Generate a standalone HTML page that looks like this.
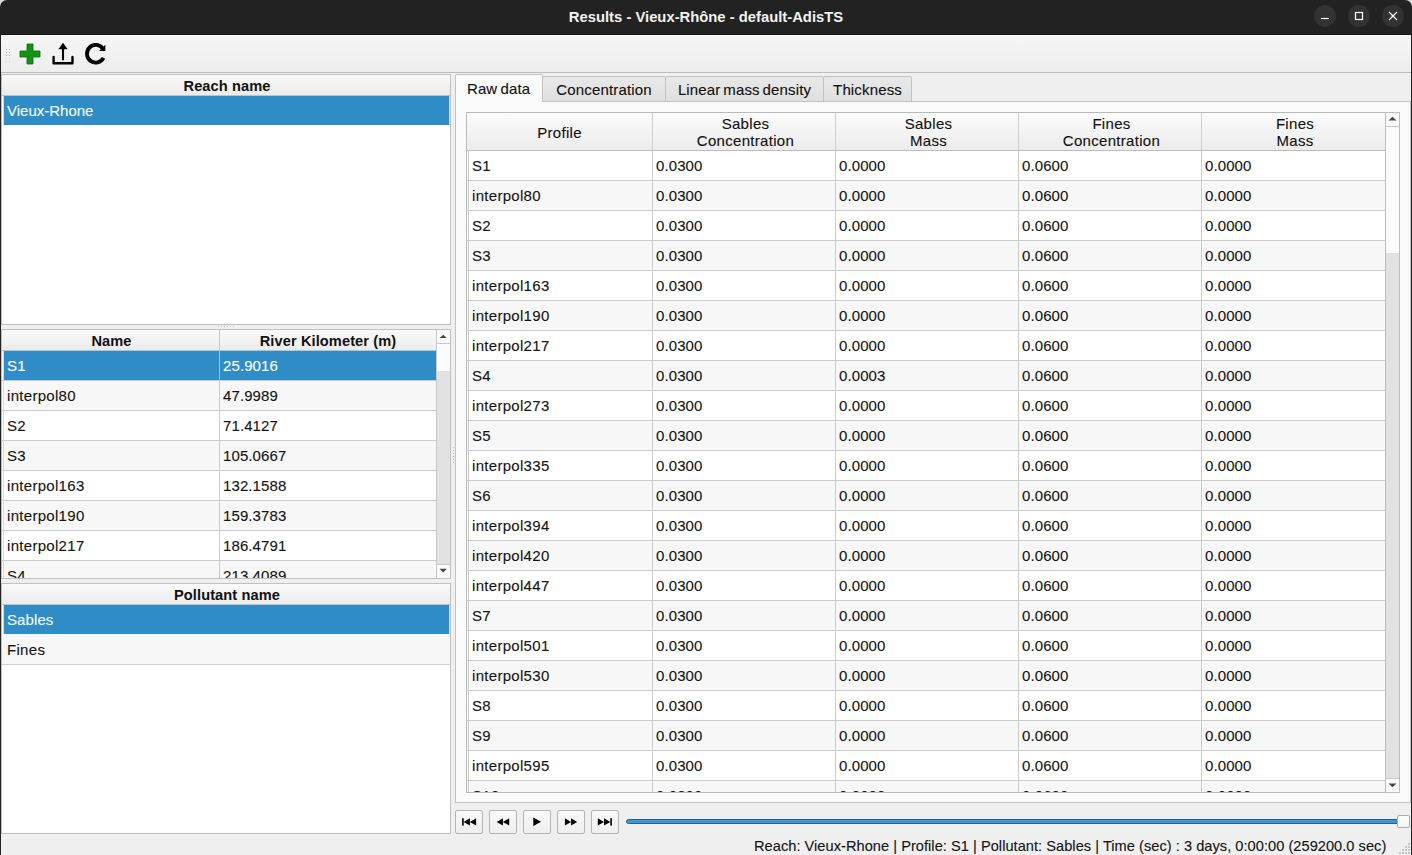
<!DOCTYPE html><html><head><meta charset="utf-8"><style>
*{margin:0;padding:0;box-sizing:border-box}
html,body{width:1412px;height:855px;overflow:hidden;background:#efefef;font-family:"Liberation Sans",sans-serif;color:#141414}
.a{position:absolute}
.t{position:absolute;white-space:nowrap;line-height:1;font-size:15px;letter-spacing:0.3px;-webkit-text-stroke:0.12px currentColor}
.b{font-weight:bold;font-size:14.6px;color:#111;letter-spacing:0.1px;-webkit-text-stroke:0}
</style></head><body><div class="a" style="left:0px;top:0px;width:1412px;height:20px;background:#dcdcdc"></div><div class="a" style="left:0px;top:0px;width:1412px;height:35px;background:#222222;border-radius:7px 7px 0 0"></div><div class="t" style="left:406.0px;top:10px;width:600px;text-align:center;color:#f2f2f2;font-weight:bold;font-size:14.8px;letter-spacing:0;-webkit-text-stroke:0">Results - Vieux-Rhône - default-AdisTS</div><div class="a" style="left:1314px;top:5px;width:22px;height:22px;background:#323232;border-radius:50%"></div><div class="a" style="left:1348px;top:5px;width:22px;height:22px;background:#323232;border-radius:50%"></div><div class="a" style="left:1382px;top:5px;width:22px;height:22px;background:#323232;border-radius:50%"></div><svg class="a" style="left:0;top:0" width="1412" height="35"><line x1="1321" y1="18.5" x2="1329" y2="18.5" stroke="#fff" stroke-width="1.2"/><rect x="1355.5" y="12.5" width="7" height="7" fill="none" stroke="#fff" stroke-width="1.2"/><path d="M1389 12 L1397 20 M1397 12 L1389 20" stroke="#fff" stroke-width="1.3"/></svg><div class="a" style="left:0px;top:35px;width:1px;height:820px;background:#222"></div><div class="a" style="left:1411px;top:35px;width:1px;height:820px;background:#222"></div><div class="a" style="left:1px;top:35px;width:1410px;height:37px;background:linear-gradient(#f6f6f6,#ededed)"></div><div class="a" style="left:1px;top:72px;width:1410px;height:1px;background:#bcbcbc"></div><div class="a" style="left:1px;top:35px;width:1410px;height:1px;background:#fdfdfd"></div><div class="a" style="left:0px;top:34px;width:1412px;height:1px;background:#141414"></div><div class="a" style="left:6px;top:49px;width:1px;height:1px;background:#b4b4b4"></div><div class="a" style="left:9px;top:49px;width:1px;height:1px;background:#b4b4b4"></div><div class="a" style="left:6px;top:52px;width:1px;height:1px;background:#b4b4b4"></div><div class="a" style="left:9px;top:52px;width:1px;height:1px;background:#b4b4b4"></div><div class="a" style="left:6px;top:55px;width:1px;height:1px;background:#b8b8b8"></div><div class="a" style="left:9px;top:55px;width:1px;height:1px;background:#b8b8b8"></div><div class="a" style="left:6px;top:58px;width:1px;height:1px;background:#d8d8d8"></div><div class="a" style="left:9px;top:58px;width:1px;height:1px;background:#d8d8d8"></div><div class="a" style="left:6px;top:61px;width:1px;height:1px;background:#dcdcdc"></div><div class="a" style="left:9px;top:61px;width:1px;height:1px;background:#dcdcdc"></div><svg class="a" style="left:0;top:35px" width="120" height="37"><g transform="translate(0,-35)"><path d="M27 44h6v7h7v6h-7v7h-6v-7h-7v-6h7z" fill="#129412" stroke="#0b6a0b" stroke-width="0.8"/><path d="M53.6 57v6.3h18.9v-6.3" fill="none" stroke="#000" stroke-width="2.4" stroke-linejoin="round" stroke-linecap="round"/><path d="M63 49v10.5" stroke="#000" stroke-width="2.1" stroke-linecap="round"/><path d="M58.4 49.2L63 42.7L67.7 49.2z" fill="#000"/><path d="M103.52 57.88A8.8 8.8 0 1 1 102.68 48.33" fill="none" stroke="#000" stroke-width="3.8"/><path d="M105.4 44.7V51H99.1z" fill="#000"/></g></svg><div class="a" style="left:1px;top:74px;width:450px;height:251px;background:#fff;border:1px solid #c0c0c0"></div><div class="a" style="left:2px;top:75px;width:448px;height:21px;background:linear-gradient(#fafafa,#ebebeb);border-bottom:1px solid #c1c1c1"></div><div class="t b" style="left:27.0px;top:79px;width:400px;text-align:center;">Reach name</div><div class="a" style="left:3px;top:96px;width:447px;height:29px;background:#c9dbe8"></div><div class="a" style="left:4px;top:96px;width:445px;height:29px;background:#308cc6"></div><div class="t" style="left:7px;top:103px;color:#f4faff;letter-spacing:0">Vieux-Rhone</div><div class="a" style="left:453px;top:447px;width:1px;height:1px;background:#bdbdbd"></div><div class="a" style="left:453px;top:450px;width:1px;height:1px;background:#bdbdbd"></div><div class="a" style="left:453px;top:453px;width:1px;height:1px;background:#bdbdbd"></div><div class="a" style="left:453px;top:456px;width:1px;height:1px;background:#bdbdbd"></div><div class="a" style="left:453px;top:459px;width:1px;height:1px;background:#bdbdbd"></div><div class="a" style="left:453px;top:462px;width:1px;height:1px;background:#bdbdbd"></div><div class="a" style="left:218px;top:326px;width:1px;height:1px;background:#c4c4c4"></div><div class="a" style="left:221px;top:326px;width:1px;height:1px;background:#c4c4c4"></div><div class="a" style="left:224px;top:326px;width:1px;height:1px;background:#c4c4c4"></div><div class="a" style="left:227px;top:326px;width:1px;height:1px;background:#c4c4c4"></div><div class="a" style="left:230px;top:326px;width:1px;height:1px;background:#c4c4c4"></div><div class="a" style="left:233px;top:326px;width:1px;height:1px;background:#c4c4c4"></div><div class="a" style="left:1px;top:329px;width:450px;height:250px;background:#fff;border:1px solid #c0c0c0"></div><div class="a" style="left:2px;top:330px;width:434px;height:21px;background:linear-gradient(#fafafa,#ebebeb);border-bottom:1px solid #c1c1c1"></div><div class="a" style="left:219px;top:330px;width:1px;height:21px;background:#c8c8c8"></div><div class="t b" style="left:-88.5px;top:334px;width:400px;text-align:center;">Name</div><div class="t b" style="left:128.0px;top:334px;width:400px;text-align:center;">River Kilometer (m)</div><div class="a" style="left:2px;top:351px;width:434px;height:227px;overflow:hidden"><div class="a" style="left:2px;top:0px;width:432px;height:29px;background:#308cc6"></div><div class="a" style="left:0;top:29px;width:434px;height:1px;background:#cbcbcb"></div><div class="a" style="left:217px;top:0px;width:1px;height:30px;background:#9cc7e4"></div><div class="t" style="left:5px;top:7px;color:#fff">S1</div><div class="t" style="left:221px;top:7px;color:#fff;letter-spacing:0.1px">25.9016</div><div class="a" style="left:2px;top:30px;width:432px;height:29px;background:#f7f7f7"></div><div class="a" style="left:0;top:59px;width:434px;height:1px;background:#cbcbcb"></div><div class="a" style="left:217px;top:30px;width:1px;height:30px;background:#cbcbcb"></div><div class="t" style="left:5px;top:37px;color:#141414">interpol80</div><div class="t" style="left:221px;top:37px;color:#141414;letter-spacing:0.1px">47.9989</div><div class="a" style="left:2px;top:60px;width:432px;height:29px;background:#ffffff"></div><div class="a" style="left:0;top:89px;width:434px;height:1px;background:#cbcbcb"></div><div class="a" style="left:217px;top:60px;width:1px;height:30px;background:#cbcbcb"></div><div class="t" style="left:5px;top:67px;color:#141414">S2</div><div class="t" style="left:221px;top:67px;color:#141414;letter-spacing:0.1px">71.4127</div><div class="a" style="left:2px;top:90px;width:432px;height:29px;background:#f7f7f7"></div><div class="a" style="left:0;top:119px;width:434px;height:1px;background:#cbcbcb"></div><div class="a" style="left:217px;top:90px;width:1px;height:30px;background:#cbcbcb"></div><div class="t" style="left:5px;top:97px;color:#141414">S3</div><div class="t" style="left:221px;top:97px;color:#141414;letter-spacing:0.1px">105.0667</div><div class="a" style="left:2px;top:120px;width:432px;height:29px;background:#ffffff"></div><div class="a" style="left:0;top:149px;width:434px;height:1px;background:#cbcbcb"></div><div class="a" style="left:217px;top:120px;width:1px;height:30px;background:#cbcbcb"></div><div class="t" style="left:5px;top:127px;color:#141414">interpol163</div><div class="t" style="left:221px;top:127px;color:#141414;letter-spacing:0.1px">132.1588</div><div class="a" style="left:2px;top:150px;width:432px;height:29px;background:#f7f7f7"></div><div class="a" style="left:0;top:179px;width:434px;height:1px;background:#cbcbcb"></div><div class="a" style="left:217px;top:150px;width:1px;height:30px;background:#cbcbcb"></div><div class="t" style="left:5px;top:157px;color:#141414">interpol190</div><div class="t" style="left:221px;top:157px;color:#141414;letter-spacing:0.1px">159.3783</div><div class="a" style="left:2px;top:180px;width:432px;height:29px;background:#ffffff"></div><div class="a" style="left:0;top:209px;width:434px;height:1px;background:#cbcbcb"></div><div class="a" style="left:217px;top:180px;width:1px;height:30px;background:#cbcbcb"></div><div class="t" style="left:5px;top:187px;color:#141414">interpol217</div><div class="t" style="left:221px;top:187px;color:#141414;letter-spacing:0.1px">186.4791</div><div class="a" style="left:2px;top:210px;width:432px;height:29px;background:#f7f7f7"></div><div class="a" style="left:0;top:239px;width:434px;height:1px;background:#cbcbcb"></div><div class="a" style="left:217px;top:210px;width:1px;height:30px;background:#cbcbcb"></div><div class="t" style="left:5px;top:217px;color:#141414">S4</div><div class="t" style="left:221px;top:217px;color:#141414;letter-spacing:0.1px">213.4089</div><div class="a" style="left:1px;top:0;width:1px;height:227px;background:#dadada"></div></div><div class="a" style="left:436px;top:330px;width:14px;height:248px;background:#fafafa;border-left:1px solid #c8c8c8"></div><div class="a" style="left:436px;top:343px;width:14px;height:1px;background:#c8c8c8"></div><div class="a" style="left:437px;top:344px;width:13px;height:27px;background:#fbfbfb"></div><div class="a" style="left:437px;top:371px;width:13px;height:193px;background:#e2e2e2"></div><div class="a" style="left:436px;top:564px;width:14px;height:1px;background:#c8c8c8"></div><svg class="a" style="left:436px;top:330px" width="15" height="248"><path d="M3.6 8L7.2 4.8L10.8 8z" fill="#444"/><path d="M3.6 238.8L7.2 242.6L10.8 238.8z" fill="#444"/></svg><div class="a" style="left:1px;top:583px;width:450px;height:251px;background:#fff;border:1px solid #c0c0c0"></div><div class="a" style="left:2px;top:584px;width:448px;height:21px;background:linear-gradient(#fafafa,#ebebeb);border-bottom:1px solid #c1c1c1"></div><div class="t b" style="left:27.0px;top:588px;width:400px;text-align:center;">Pollutant name</div><div class="a" style="left:3px;top:605px;width:447px;height:29px;background:#c9dbe8"></div><div class="a" style="left:4px;top:605px;width:445px;height:29px;background:#308cc6"></div><div class="t" style="left:7px;top:612px;color:#f4faff;letter-spacing:0.1px">Sables</div><div class="a" style="left:2px;top:634px;width:448px;height:31px;background:#f7f7f7;border-bottom:1px solid #cfcfcf"></div><div class="t" style="left:7px;top:642px;">Fines</div><div class="a" style="left:455px;top:101px;width:956px;height:702px;background:#fafafa;border:1px solid #c2c2c2"></div><div class="a" style="left:455px;top:74px;width:88px;height:28px;background:#fafafa;border:1px solid #c2c2c2;border-bottom:none;border-radius:2px 2px 0 0"></div><div class="t" style="left:467px;top:81px;color:#111;letter-spacing:0.1px;word-spacing:-1px">Raw data</div><div class="a" style="left:542px;top:76px;width:124px;height:26px;background:linear-gradient(#e8e8e8,#e0e0e0);border:1px solid #c2c2c2;border-radius:2px 2px 0 0"></div><div class="t" style="left:504.0px;top:82px;width:200px;text-align:center;color:#111;letter-spacing:0.15px;word-spacing:-1.5px">Concentration</div><div class="a" style="left:665px;top:76px;width:159px;height:26px;background:linear-gradient(#e8e8e8,#e0e0e0);border:1px solid #c2c2c2;border-radius:2px 2px 0 0"></div><div class="t" style="left:644.5px;top:82px;width:200px;text-align:center;color:#111;letter-spacing:0.15px;word-spacing:-1.5px">Linear mass density</div><div class="a" style="left:823px;top:76px;width:89px;height:26px;background:linear-gradient(#e8e8e8,#e0e0e0);border:1px solid #c2c2c2;border-radius:2px 2px 0 0"></div><div class="t" style="left:767.5px;top:82px;width:200px;text-align:center;color:#111;letter-spacing:0.15px;word-spacing:-1.5px">Thickness</div><div class="a" style="left:466px;top:112px;width:934px;height:681px;background:#fff;border:1px solid #b9b9b9"></div><div class="a" style="left:467px;top:113px;width:918px;height:38px;background:linear-gradient(#fbfbfb,#ececec);border-bottom:1px solid #bdbdbd"></div><div class="t" style="left:469.5px;top:125px;width:180px;text-align:center;color:#111">Profile</div><div class="a" style="left:652px;top:113px;width:1px;height:37px;background:#cfcfcf"></div><div class="t" style="left:655.5px;top:115px;width:180px;text-align:center;line-height:17px;color:#111">Sables<br>Concentration</div><div class="a" style="left:835px;top:113px;width:1px;height:37px;background:#cfcfcf"></div><div class="t" style="left:838.5px;top:115px;width:180px;text-align:center;line-height:17px;color:#111">Sables<br>Mass</div><div class="a" style="left:1018px;top:113px;width:1px;height:37px;background:#cfcfcf"></div><div class="t" style="left:1021.5px;top:115px;width:180px;text-align:center;line-height:17px;color:#111">Fines<br>Concentration</div><div class="a" style="left:1201px;top:113px;width:1px;height:37px;background:#cfcfcf"></div><div class="t" style="left:1205.0px;top:115px;width:180px;text-align:center;line-height:17px;color:#111">Fines<br>Mass</div><div class="a" style="left:467px;top:151px;width:918px;height:641px;overflow:hidden"><div class="a" style="left:0;top:0px;width:918px;height:30px;background:#ffffff;border-bottom:1px solid #cbcbcb"></div><div class="t" style="left:5px;top:7px;">S1</div><div class="t" style="left:189px;top:7px;letter-spacing:0.1px">0.0300</div><div class="t" style="left:372px;top:7px;letter-spacing:0.1px">0.0000</div><div class="t" style="left:555px;top:7px;letter-spacing:0.1px">0.0600</div><div class="t" style="left:738px;top:7px;letter-spacing:0.1px">0.0000</div><div class="a" style="left:0;top:30px;width:918px;height:30px;background:#f7f7f7;border-bottom:1px solid #cbcbcb"></div><div class="t" style="left:5px;top:37px;">interpol80</div><div class="t" style="left:189px;top:37px;letter-spacing:0.1px">0.0300</div><div class="t" style="left:372px;top:37px;letter-spacing:0.1px">0.0000</div><div class="t" style="left:555px;top:37px;letter-spacing:0.1px">0.0600</div><div class="t" style="left:738px;top:37px;letter-spacing:0.1px">0.0000</div><div class="a" style="left:0;top:60px;width:918px;height:30px;background:#ffffff;border-bottom:1px solid #cbcbcb"></div><div class="t" style="left:5px;top:67px;">S2</div><div class="t" style="left:189px;top:67px;letter-spacing:0.1px">0.0300</div><div class="t" style="left:372px;top:67px;letter-spacing:0.1px">0.0000</div><div class="t" style="left:555px;top:67px;letter-spacing:0.1px">0.0600</div><div class="t" style="left:738px;top:67px;letter-spacing:0.1px">0.0000</div><div class="a" style="left:0;top:90px;width:918px;height:30px;background:#f7f7f7;border-bottom:1px solid #cbcbcb"></div><div class="t" style="left:5px;top:97px;">S3</div><div class="t" style="left:189px;top:97px;letter-spacing:0.1px">0.0300</div><div class="t" style="left:372px;top:97px;letter-spacing:0.1px">0.0000</div><div class="t" style="left:555px;top:97px;letter-spacing:0.1px">0.0600</div><div class="t" style="left:738px;top:97px;letter-spacing:0.1px">0.0000</div><div class="a" style="left:0;top:120px;width:918px;height:30px;background:#ffffff;border-bottom:1px solid #cbcbcb"></div><div class="t" style="left:5px;top:127px;">interpol163</div><div class="t" style="left:189px;top:127px;letter-spacing:0.1px">0.0300</div><div class="t" style="left:372px;top:127px;letter-spacing:0.1px">0.0000</div><div class="t" style="left:555px;top:127px;letter-spacing:0.1px">0.0600</div><div class="t" style="left:738px;top:127px;letter-spacing:0.1px">0.0000</div><div class="a" style="left:0;top:150px;width:918px;height:30px;background:#f7f7f7;border-bottom:1px solid #cbcbcb"></div><div class="t" style="left:5px;top:157px;">interpol190</div><div class="t" style="left:189px;top:157px;letter-spacing:0.1px">0.0300</div><div class="t" style="left:372px;top:157px;letter-spacing:0.1px">0.0000</div><div class="t" style="left:555px;top:157px;letter-spacing:0.1px">0.0600</div><div class="t" style="left:738px;top:157px;letter-spacing:0.1px">0.0000</div><div class="a" style="left:0;top:180px;width:918px;height:30px;background:#ffffff;border-bottom:1px solid #cbcbcb"></div><div class="t" style="left:5px;top:187px;">interpol217</div><div class="t" style="left:189px;top:187px;letter-spacing:0.1px">0.0300</div><div class="t" style="left:372px;top:187px;letter-spacing:0.1px">0.0000</div><div class="t" style="left:555px;top:187px;letter-spacing:0.1px">0.0600</div><div class="t" style="left:738px;top:187px;letter-spacing:0.1px">0.0000</div><div class="a" style="left:0;top:210px;width:918px;height:30px;background:#f7f7f7;border-bottom:1px solid #cbcbcb"></div><div class="t" style="left:5px;top:217px;">S4</div><div class="t" style="left:189px;top:217px;letter-spacing:0.1px">0.0300</div><div class="t" style="left:372px;top:217px;letter-spacing:0.1px">0.0003</div><div class="t" style="left:555px;top:217px;letter-spacing:0.1px">0.0600</div><div class="t" style="left:738px;top:217px;letter-spacing:0.1px">0.0000</div><div class="a" style="left:0;top:240px;width:918px;height:30px;background:#ffffff;border-bottom:1px solid #cbcbcb"></div><div class="t" style="left:5px;top:247px;">interpol273</div><div class="t" style="left:189px;top:247px;letter-spacing:0.1px">0.0300</div><div class="t" style="left:372px;top:247px;letter-spacing:0.1px">0.0000</div><div class="t" style="left:555px;top:247px;letter-spacing:0.1px">0.0600</div><div class="t" style="left:738px;top:247px;letter-spacing:0.1px">0.0000</div><div class="a" style="left:0;top:270px;width:918px;height:30px;background:#f7f7f7;border-bottom:1px solid #cbcbcb"></div><div class="t" style="left:5px;top:277px;">S5</div><div class="t" style="left:189px;top:277px;letter-spacing:0.1px">0.0300</div><div class="t" style="left:372px;top:277px;letter-spacing:0.1px">0.0000</div><div class="t" style="left:555px;top:277px;letter-spacing:0.1px">0.0600</div><div class="t" style="left:738px;top:277px;letter-spacing:0.1px">0.0000</div><div class="a" style="left:0;top:300px;width:918px;height:30px;background:#ffffff;border-bottom:1px solid #cbcbcb"></div><div class="t" style="left:5px;top:307px;">interpol335</div><div class="t" style="left:189px;top:307px;letter-spacing:0.1px">0.0300</div><div class="t" style="left:372px;top:307px;letter-spacing:0.1px">0.0000</div><div class="t" style="left:555px;top:307px;letter-spacing:0.1px">0.0600</div><div class="t" style="left:738px;top:307px;letter-spacing:0.1px">0.0000</div><div class="a" style="left:0;top:330px;width:918px;height:30px;background:#f7f7f7;border-bottom:1px solid #cbcbcb"></div><div class="t" style="left:5px;top:337px;">S6</div><div class="t" style="left:189px;top:337px;letter-spacing:0.1px">0.0300</div><div class="t" style="left:372px;top:337px;letter-spacing:0.1px">0.0000</div><div class="t" style="left:555px;top:337px;letter-spacing:0.1px">0.0600</div><div class="t" style="left:738px;top:337px;letter-spacing:0.1px">0.0000</div><div class="a" style="left:0;top:360px;width:918px;height:30px;background:#ffffff;border-bottom:1px solid #cbcbcb"></div><div class="t" style="left:5px;top:367px;">interpol394</div><div class="t" style="left:189px;top:367px;letter-spacing:0.1px">0.0300</div><div class="t" style="left:372px;top:367px;letter-spacing:0.1px">0.0000</div><div class="t" style="left:555px;top:367px;letter-spacing:0.1px">0.0600</div><div class="t" style="left:738px;top:367px;letter-spacing:0.1px">0.0000</div><div class="a" style="left:0;top:390px;width:918px;height:30px;background:#f7f7f7;border-bottom:1px solid #cbcbcb"></div><div class="t" style="left:5px;top:397px;">interpol420</div><div class="t" style="left:189px;top:397px;letter-spacing:0.1px">0.0300</div><div class="t" style="left:372px;top:397px;letter-spacing:0.1px">0.0000</div><div class="t" style="left:555px;top:397px;letter-spacing:0.1px">0.0600</div><div class="t" style="left:738px;top:397px;letter-spacing:0.1px">0.0000</div><div class="a" style="left:0;top:420px;width:918px;height:30px;background:#ffffff;border-bottom:1px solid #cbcbcb"></div><div class="t" style="left:5px;top:427px;">interpol447</div><div class="t" style="left:189px;top:427px;letter-spacing:0.1px">0.0300</div><div class="t" style="left:372px;top:427px;letter-spacing:0.1px">0.0000</div><div class="t" style="left:555px;top:427px;letter-spacing:0.1px">0.0600</div><div class="t" style="left:738px;top:427px;letter-spacing:0.1px">0.0000</div><div class="a" style="left:0;top:450px;width:918px;height:30px;background:#f7f7f7;border-bottom:1px solid #cbcbcb"></div><div class="t" style="left:5px;top:457px;">S7</div><div class="t" style="left:189px;top:457px;letter-spacing:0.1px">0.0300</div><div class="t" style="left:372px;top:457px;letter-spacing:0.1px">0.0000</div><div class="t" style="left:555px;top:457px;letter-spacing:0.1px">0.0600</div><div class="t" style="left:738px;top:457px;letter-spacing:0.1px">0.0000</div><div class="a" style="left:0;top:480px;width:918px;height:30px;background:#ffffff;border-bottom:1px solid #cbcbcb"></div><div class="t" style="left:5px;top:487px;">interpol501</div><div class="t" style="left:189px;top:487px;letter-spacing:0.1px">0.0300</div><div class="t" style="left:372px;top:487px;letter-spacing:0.1px">0.0000</div><div class="t" style="left:555px;top:487px;letter-spacing:0.1px">0.0600</div><div class="t" style="left:738px;top:487px;letter-spacing:0.1px">0.0000</div><div class="a" style="left:0;top:510px;width:918px;height:30px;background:#f7f7f7;border-bottom:1px solid #cbcbcb"></div><div class="t" style="left:5px;top:517px;">interpol530</div><div class="t" style="left:189px;top:517px;letter-spacing:0.1px">0.0300</div><div class="t" style="left:372px;top:517px;letter-spacing:0.1px">0.0000</div><div class="t" style="left:555px;top:517px;letter-spacing:0.1px">0.0600</div><div class="t" style="left:738px;top:517px;letter-spacing:0.1px">0.0000</div><div class="a" style="left:0;top:540px;width:918px;height:30px;background:#ffffff;border-bottom:1px solid #cbcbcb"></div><div class="t" style="left:5px;top:547px;">S8</div><div class="t" style="left:189px;top:547px;letter-spacing:0.1px">0.0300</div><div class="t" style="left:372px;top:547px;letter-spacing:0.1px">0.0000</div><div class="t" style="left:555px;top:547px;letter-spacing:0.1px">0.0600</div><div class="t" style="left:738px;top:547px;letter-spacing:0.1px">0.0000</div><div class="a" style="left:0;top:570px;width:918px;height:30px;background:#f7f7f7;border-bottom:1px solid #cbcbcb"></div><div class="t" style="left:5px;top:577px;">S9</div><div class="t" style="left:189px;top:577px;letter-spacing:0.1px">0.0300</div><div class="t" style="left:372px;top:577px;letter-spacing:0.1px">0.0000</div><div class="t" style="left:555px;top:577px;letter-spacing:0.1px">0.0600</div><div class="t" style="left:738px;top:577px;letter-spacing:0.1px">0.0000</div><div class="a" style="left:0;top:600px;width:918px;height:30px;background:#ffffff;border-bottom:1px solid #cbcbcb"></div><div class="t" style="left:5px;top:607px;">interpol595</div><div class="t" style="left:189px;top:607px;letter-spacing:0.1px">0.0300</div><div class="t" style="left:372px;top:607px;letter-spacing:0.1px">0.0000</div><div class="t" style="left:555px;top:607px;letter-spacing:0.1px">0.0600</div><div class="t" style="left:738px;top:607px;letter-spacing:0.1px">0.0000</div><div class="a" style="left:0;top:630px;width:918px;height:30px;background:#f7f7f7;border-bottom:1px solid #cbcbcb"></div><div class="t" style="left:5px;top:637px;">S10</div><div class="t" style="left:189px;top:637px;letter-spacing:0.1px">0.0300</div><div class="t" style="left:372px;top:637px;letter-spacing:0.1px">0.0000</div><div class="t" style="left:555px;top:637px;letter-spacing:0.1px">0.0600</div><div class="t" style="left:738px;top:637px;letter-spacing:0.1px">0.0000</div><div class="a" style="left:185px;top:0;width:1px;height:641px;background:#cbcbcb"></div><div class="a" style="left:368px;top:0;width:1px;height:641px;background:#cbcbcb"></div><div class="a" style="left:551px;top:0;width:1px;height:641px;background:#cbcbcb"></div><div class="a" style="left:734px;top:0;width:1px;height:641px;background:#cbcbcb"></div><div class="a" style="left:1px;top:0;width:1px;height:641px;background:#cbcbcb"></div></div><div class="a" style="left:1385px;top:112px;width:15px;height:681px;background:#fafafa;border:1px solid #bdbdbd"></div><div class="a" style="left:1386px;top:126px;width:13px;height:1px;background:#c8c8c8"></div><div class="a" style="left:1386px;top:127px;width:13px;height:126px;background:#fbfbfb"></div><div class="a" style="left:1386px;top:253px;width:13px;height:525px;background:#e2e2e2"></div><div class="a" style="left:1386px;top:778px;width:13px;height:1px;background:#c8c8c8"></div><svg class="a" style="left:1385px;top:112px" width="15" height="681"><path d="M3.5 8.5L7.5 4.8L11.5 8.5z" fill="#444"/><path d="M3.5 671.5L7.5 675.2L11.5 671.5z" fill="#444"/></svg><div class="a" style="left:455px;top:810px;width:28px;height:24px;background:linear-gradient(#f9f9f9,#efefef);border:1px solid #b4b4b4;border-radius:2px"></div><div class="a" style="left:489px;top:810px;width:28px;height:24px;background:linear-gradient(#f9f9f9,#efefef);border:1px solid #b4b4b4;border-radius:2px"></div><div class="a" style="left:523px;top:810px;width:28px;height:24px;background:linear-gradient(#f9f9f9,#efefef);border:1px solid #b4b4b4;border-radius:2px"></div><div class="a" style="left:557px;top:810px;width:28px;height:24px;background:linear-gradient(#f9f9f9,#efefef);border:1px solid #b4b4b4;border-radius:2px"></div><div class="a" style="left:591px;top:810px;width:28px;height:24px;background:linear-gradient(#f9f9f9,#efefef);border:1px solid #b4b4b4;border-radius:2px"></div><svg class="a" style="left:455px;top:810px" width="170" height="24"><rect x="7.1" y="8.2" width="1.6" height="7.4" fill="#000"/><path d="M8.6 11.9L14.9 8.2V15.6zM14.9 11.9L21.1 8.2V15.6z" fill="#000"/><path d="M41.7 11.9L47.9 8.2V15.6zM47.9 11.9L54.2 8.2V15.6z" fill="#000"/><path d="M78.3 7.5V16L86.1 11.75z" fill="#000"/><path d="M109.9 8.2V15.6L116.1 11.9zM116.1 8.2V15.6L122.1 11.9z" fill="#000"/><path d="M142.8 8.2V15.6L149 11.9zM149 8.2V15.6L155.3 11.9z" fill="#000"/><rect x="155.3" y="8.2" width="1.6" height="7.4" fill="#000"/></svg><div class="a" style="left:626px;top:819px;width:775px;height:5px;background:#3a97d3;border:1px solid #265f88;border-radius:3px"></div><div class="a" style="left:1397px;top:815px;width:13px;height:13px;background:linear-gradient(#fdfdfd,#f3f3f3);border:1px solid #a9a9a9;border-radius:2px"></div><div class="t" style="left:754px;top:839px;font-size:14.6px;letter-spacing:0.04px;color:#141414">Reach: Vieux-Rhone | Profile: S1 | Pollutant: Sables | Time (sec) : 3 days, 0:00:00 (259200.0 sec)</div><div class="a" style="left:1408px;top:843px;width:2px;height:2px;background:#c6c6c6"></div><div class="a" style="left:1405px;top:846px;width:2px;height:2px;background:#c6c6c6"></div><div class="a" style="left:1408px;top:846px;width:2px;height:2px;background:#c6c6c6"></div><div class="a" style="left:1402px;top:849px;width:2px;height:2px;background:#c6c6c6"></div><div class="a" style="left:1405px;top:849px;width:2px;height:2px;background:#c6c6c6"></div><div class="a" style="left:1408px;top:849px;width:2px;height:2px;background:#c6c6c6"></div><div class="a" style="left:1399px;top:852px;width:2px;height:2px;background:#c6c6c6"></div><div class="a" style="left:1402px;top:852px;width:2px;height:2px;background:#c6c6c6"></div><div class="a" style="left:1405px;top:852px;width:2px;height:2px;background:#c6c6c6"></div><div class="a" style="left:1408px;top:852px;width:2px;height:2px;background:#c6c6c6"></div></body></html>
